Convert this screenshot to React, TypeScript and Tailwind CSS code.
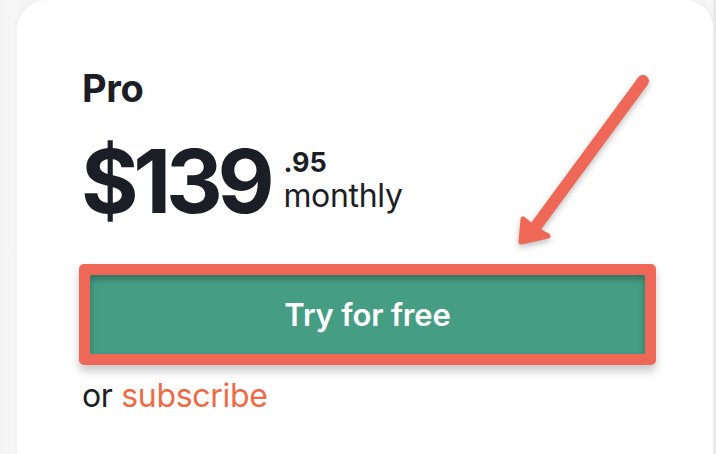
import React from "react";

export default function App() {
  return (
    <div
      className="relative w-[716px] h-[454px] overflow-hidden bg-[#f5f5f5] flex"
      style={{ fontFamily: "Inter, 'Noto Sans', sans-serif" }}
    >
      <div className="w-[17px] shrink-0 bg-gradient-to-r from-[#f3f3f3] to-[#f7f7f7]" />
      <div className="flex-1 h-[500px] bg-white rounded-tl-[30px] rounded-tr-[28px] shadow-[0_0_6px_rgba(0,0,0,0.05)] pl-[62px] pt-[69px] flex flex-col">
        <div className="pl-[3px] text-[38px] leading-none font-bold text-[#1b1e24] tracking-[-0.01em]">
          Pro
        </div>
        <div className="mt-[30px] pl-[2px] flex items-start text-[#1b1e24]">
          <div className="text-[88px] leading-none font-bold tracking-[-0.06em]">$139</div>
          <div className="ml-[14px] flex flex-col">
            <div className="mt-[15px] text-[27px] leading-[22px] font-bold">.95</div>
            <div className="mt-[8px] text-[32px] leading-[28px] font-normal tracking-[-0.01em]">monthly</div>
          </div>
        </div>
        <div className="mt-[39px] w-[577px] h-[101px] rounded-[5px] border-[11px] border-[#ee6757] bg-[#459d84] shadow-[0_6px_10px_rgba(0,0,0,0.22)] flex">
          <div className="flex-1 flex items-center justify-center shadow-[inset_0_4px_6px_rgba(0,0,0,0.28)] rounded-[2px]">
            <span className="text-white text-[31px] font-semibold leading-none tracking-[-0.005em]">
              Try for free
            </span>
          </div>
        </div>
        <div className="mt-[15px] pl-[3px] text-[32px] leading-none tracking-[-0.01em]">
          <span className="text-[#1b1e24]">or </span>
          <span className="text-[#ef6a45]">subscribe</span>
        </div>
      </div>
      <div className="w-[3px] shrink-0 bg-[#e9e9e9]" />
      <svg
        className="absolute left-0 top-0 pointer-events-none drop-shadow-[0_3px_3px_rgba(0,0,0,0.25)]"
        width="716"
        height="454"
        viewBox="0 0 716 454"
      >
        <line x1="643" y1="81" x2="531" y2="233" stroke="#ee6757" strokeWidth="12" strokeLinecap="round" />
        <path
          d="M523 219 L521 242 L548 236 L535 229 Z"
          fill="#ee6757"
          stroke="#ee6757"
          strokeWidth="5"
          strokeLinejoin="round"
        />
      </svg>
    </div>
  );
}
